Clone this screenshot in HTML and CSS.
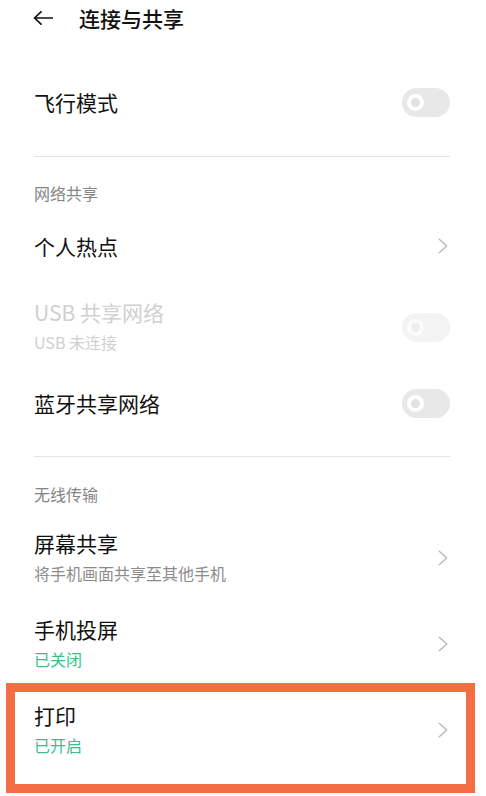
FILE: index.html
```html
<!DOCTYPE html>
<html lang="zh-CN">
<head>
<meta charset="utf-8">
<title>连接与共享</title>
<link rel="stylesheet" href="styles.css">
</head>
<body>
<div class="page">
  <header class="header">
    <svg class="back" width="20" height="14" viewBox="0 0 20 14"><path d="M19.5 7H1.5M8 0.8L1.5 7L8 13.2" fill="none" stroke="#111111" stroke-width="1.7" stroke-linecap="round" stroke-linejoin="round"/></svg>
    <h1 class="title">连接与共享</h1>
  </header>

  <div class="row row-air">
    <div class="texts"><div class="label">飞行模式</div></div>
    <span class="switch"><span class="knob"></span></span>
  </div>
  <div class="divider divider-1"></div>

  <div class="section section-1">网络共享</div>
  <div class="row row-hotspot">
    <div class="texts"><div class="label">个人热点</div></div>
    <svg class="chev" width="10" height="16" viewBox="0 0 10 16"><polyline points="1.2,1.2 8.8,8 1.2,14.8" fill="none" stroke="#b8b8b8" stroke-width="1.4" stroke-linecap="round" stroke-linejoin="round"/></svg>
  </div>
  <div class="row row-two disabled">
    <div class="texts"><div class="label">USB 共享网络</div><div class="sub">USB 未连接</div></div>
    <span class="switch switch-off"><span class="knob"></span></span>
  </div>
  <div class="row row-bt">
    <div class="texts"><div class="label">蓝牙共享网络</div></div>
    <span class="switch"><span class="knob"></span></span>
  </div>
  <div class="divider divider-2"></div>

  <div class="section section-2">无线传输</div>
  <div class="row row-two">
    <div class="texts"><div class="label">屏幕共享</div><div class="sub">将手机画面共享至其他手机</div></div>
    <svg class="chev" width="10" height="16" viewBox="0 0 10 16"><polyline points="1.2,1.2 8.8,8 1.2,14.8" fill="none" stroke="#b8b8b8" stroke-width="1.4" stroke-linecap="round" stroke-linejoin="round"/></svg>
  </div>
  <div class="row row-two">
    <div class="texts"><div class="label">手机投屏</div><div class="sub green">已关闭</div></div>
    <svg class="chev" width="10" height="16" viewBox="0 0 10 16"><polyline points="1.2,1.2 8.8,8 1.2,14.8" fill="none" stroke="#b8b8b8" stroke-width="1.4" stroke-linecap="round" stroke-linejoin="round"/></svg>
  </div>
  <div class="row row-two row-print">
    <div class="texts"><div class="label">打印</div><div class="sub green">已开启</div></div>
    <svg class="chev" width="10" height="16" viewBox="0 0 10 16"><polyline points="1.2,1.2 8.8,8 1.2,14.8" fill="none" stroke="#b8b8b8" stroke-width="1.4" stroke-linecap="round" stroke-linejoin="round"/></svg>
    <div class="highlight"></div>
  </div>
</div>
</body>
</html>
```

FILE: styles.css
```css
html, body {
  margin: 0;
  padding: 0;
  background: #ffffff;
}
body {
  font-family: "Noto Sans CJK SC", "Noto Sans", sans-serif;
  color: #111111;
  overflow: hidden;
}
.page {
  display: flex;
  flex-direction: column;
  padding: 0 36px 0 34px;
  width: 486px;
  height: 796px;
  box-sizing: border-box;
}
.header {
  height: 36px;
  display: flex;
  align-items: center;
  gap: 26px;
  margin-left: -1px;
}
.back { display: block; }
.title {
  margin: 0;
  font-size: 21px;
  font-weight: 500;
  line-height: 30px;
}
.row {
  display: flex;
  align-items: center;
  justify-content: space-between;
  position: relative;
}
.row-air { margin-top: 30px; height: 72px; }
.row-hotspot { height: 76px; }
.row-bt { height: 66px; }
.row-two { height: 86px; }
.label {
  font-size: 21px;
  line-height: 30px;
}
.sub {
  font-size: 16px;
  line-height: 30px;
  color: #8c8c8c;
}
.green { color: #3dbd8c; }
.disabled .label, .disabled .sub { color: #d0d0d0; }
.divider {
  height: 1px;
  background: #e4e4e4;
}
.divider-1 { margin-top: 18px; }
.divider-2 { margin-top: 20px; }
.section {
  font-size: 16px;
  line-height: 20px;
  color: #858585;
}
.section-1 { padding-top: 26px; padding-bottom: 5px; }
.section-2 { padding-top: 27px; padding-bottom: 11px; }
.switch {
  width: 48px;
  height: 29px;
  border-radius: 15px;
  background: #e8e8e8;
  display: flex;
  align-items: center;
  padding-left: 5px;
  box-sizing: border-box;
}
.switch-off { background: #f3f3f3; }
.knob {
  width: 17px;
  height: 17px;
  border-radius: 50%;
  border: 4px solid #ffffff;
  background: #e2e2e2;
  box-sizing: border-box;
}
.switch-off .knob { background: #eeeeee; border-color: #fbfbfb; }
.chev {
  display: block;
  margin-right: 2px;
}
.highlight {
  position: absolute;
  top: -4px;
  left: -28px;
  width: 469px;
  height: 110px;
  border: 9px solid #f36e42;
  box-sizing: border-box;
}
```
